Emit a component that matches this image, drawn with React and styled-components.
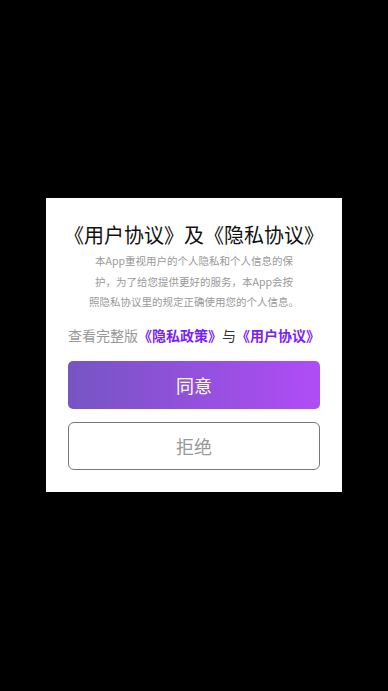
import React from "react";
import styled, { createGlobalStyle } from "styled-components";

const Global = createGlobalStyle`
  html, body { margin: 0; padding: 0; background: #000; }
  body { font-family: "Noto Sans CJK SC", "Noto Sans", sans-serif; }
  #root { width: 388px; height: 691px; }
`;

const Screen = styled.div`
  width: 388px;
  height: 691px;
  background: #000;
  display: flex;
  align-items: center;
  justify-content: center;
`;

const Card = styled.div`
  width: 296px;
  box-sizing: border-box;
  background: #fff;
  padding: 24px 22px 22px;
  display: flex;
  flex-direction: column;
  align-items: center;
  margin-top: -1px;
`;

const Title = styled.h1`
  margin: 0;
  font-size: 20px;
  line-height: 26px;
  font-weight: 400;
  color: #111;
  text-align: center;
  white-space: nowrap;
`;

const Paragraph = styled.p`
  margin: 3px 0 0;
  font-size: 10.5px;
  line-height: 20.5px;
  color: #999;
  text-align: center;
`;

const Line = styled.span`
  display: block;
  white-space: nowrap;
`;

const LinkLine = styled.div`
  margin-top: 12px;
  align-self: stretch;
  font-size: 14px;
  line-height: 20px;
  color: #999;
  white-space: nowrap;
`;

const Link = styled.span`
  color: #7a1ff8;
  font-weight: 700;
`;

const Conj = styled.span`
  color: #333;
`;

const Button = styled.button`
  align-self: stretch;
  height: 48px;
  box-sizing: border-box;
  border-radius: ${(p) => (p.$primary ? "5px" : "6px")};
  border: ${(p) => (p.$primary ? "none" : "1px solid #777")};
  background: ${(p) =>
    p.$primary ? "linear-gradient(90deg, #7655c3 0%, #b04cf6 100%)" : "#fff"};
  color: ${(p) => (p.$primary ? "#fff" : "#999")};
  font-family: "Noto Sans CJK SC", sans-serif;
  font-size: 18px;
  margin-top: ${(p) => p.$mt}px;
  padding: 0;
  cursor: pointer;
`;

export default function App() {
  return (
    <>
      <Global />
      <Screen>
        <Card>
          <Title>《用户协议》及《隐私协议》</Title>
          <Paragraph>
            <Line>本App重视用户的个人隐私和个人信息的保</Line>
            <Line>护，为了给您提供更好的服务，本App会按</Line>
            <Line>照隐私协议里的规定正确使用您的个人信息。</Line>
          </Paragraph>
          <LinkLine>
            查看完整版<Link>《隐私政策》</Link>
            <Conj>与</Conj>
            <Link>《用户协议》</Link>
          </LinkLine>
          <Button $primary $mt={16}>同意</Button>
          <Button $mt={13}>拒绝</Button>
        </Card>
      </Screen>
    </>
  );
}
